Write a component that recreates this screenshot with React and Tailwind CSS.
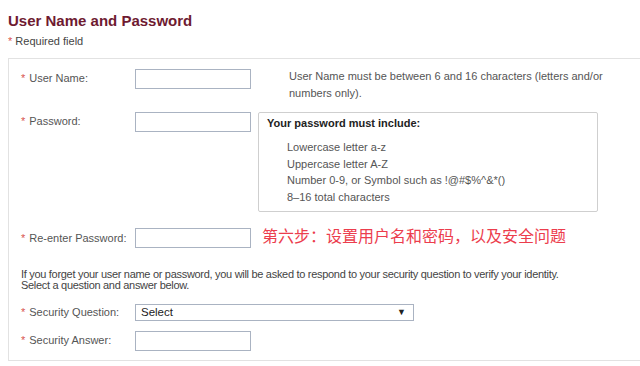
import React from 'react';

const Label = ({ children }) => (
  <div className="w-[114px] shrink-0 text-[#555] leading-[19px]">
    <span className="text-[#d9534f] mr-1">*</span>
    {children}
  </div>
);

const Box = ({ w = 'w-[116px]' }) => (
  <div className={`${w} h-[20px] border border-[#aab3c2] bg-white shrink-0`} />
);

const rules = [
  'Lowercase letter a-z',
  'Uppercase letter A-Z',
  'Number 0-9, or Symbol such as !@#$%^&*()',
  '8–16 total characters',
];

const App = () => {
  return (
    <div
      className="w-[640px] h-[366px] bg-white overflow-hidden text-[11px] text-[#444]"
      style={{ fontFamily: '"Liberation Sans", Arial, sans-serif' }}
    >
      <div className="pl-2 pt-[12px]">
        <h1 className="text-[15px] font-bold text-[#6e1a31] leading-[18px]">User Name and Password</h1>
        <div className="mt-[4px] leading-[14px] text-[#444]">
          <span className="text-[#d9534f]">*</span> Required field
        </div>
        <div className="mt-[10px] border border-r-0 border-[#e2e2e2] h-[303px] pl-[12px] pt-[10px]">
          <div className="flex">
            <Label>User Name:</Label>
            <Box />
            <div className="ml-[38px] w-[320px] leading-[17px] -mt-[1px] text-[#555]">
              User Name must be between 6 and 16 characters (letters and/or numbers only).
            </div>
          </div>
          <div className="flex mt-[10px]">
            <Label>Password:</Label>
            <Box />
            <div className="ml-[7px] w-[340px] h-[100px] border border-[#cfcfcf] rounded-[2px] pl-[8px] pt-[3px]">
              <div className="font-bold text-[#222] leading-[15px]">Your password must include:</div>
              <div className="pl-[20px] mt-[8px] text-[#555]">
                {rules.map((r) => (
                  <div key={r} className="leading-[16.5px]">{r}</div>
                ))}
              </div>
            </div>
          </div>
          <div className="flex mt-[16px] items-center">
            <Label>Re-enter Password:</Label>
            <Box />
            <div
              className="ml-[11px] -mt-[6px] text-[16px] text-[#ec3d4d] leading-[20px]"
              style={{ fontFamily: '"Noto Sans CJK SC", sans-serif' }}
            >
              第六步：设置用户名和密码，以及安全问题
            </div>
          </div>
          <div className="mt-[21px] leading-[11px] text-[#444] tracking-[-0.3px]">
            If you forget your user name or password, you will be asked to respond to your security question to verify your identity.
            <br />
            Select a question and answer below.
          </div>
          <div className="flex mt-[12px] items-center">
            <Label>Security Question:</Label>
            <div className="w-[279px] h-[17px] border border-[#aab3c2] flex items-center justify-between pl-[5px] pr-[7px] text-[#222] text-[11.5px]">
              <span>Select</span>
              <span className="text-[9px]">▼</span>
            </div>
          </div>
          <div className="flex mt-[9px]">
            <Label>Security Answer:</Label>
            <Box />
          </div>
        </div>
      </div>
    </div>
  );
};

export default App;
